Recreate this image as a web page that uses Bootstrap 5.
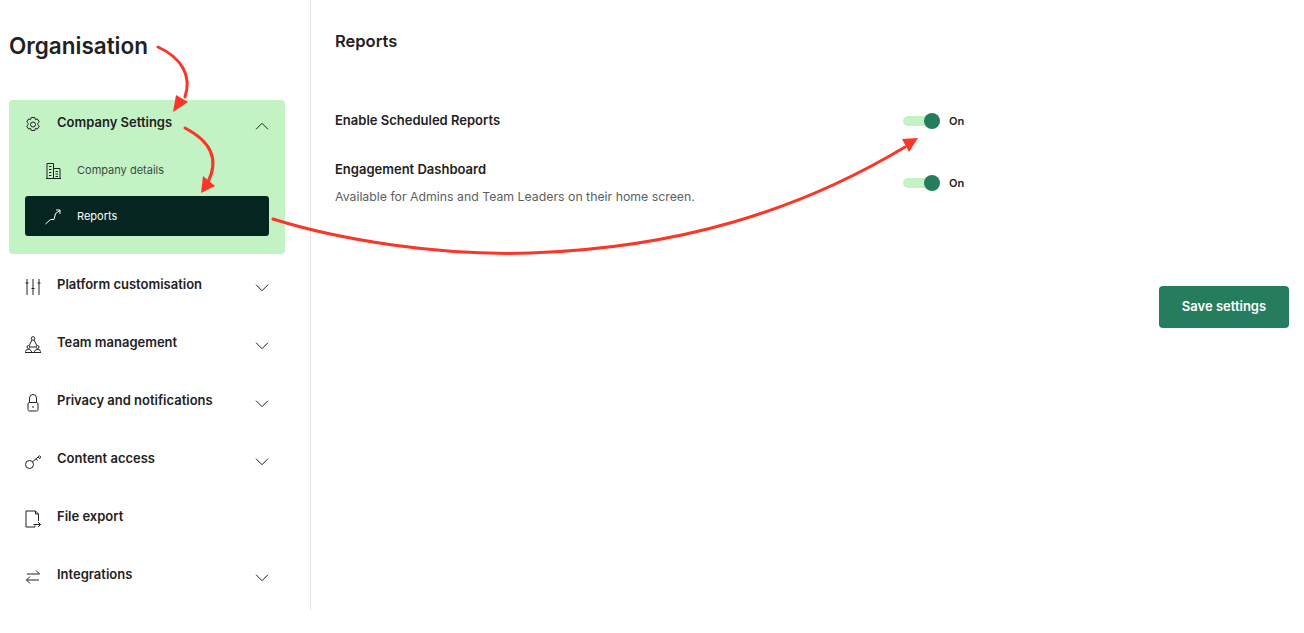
<!DOCTYPE html>
<html>
<head>
    <title>Organisation - Reports</title>
    <meta charset="UTF-8">
    <link href="https://cdn.jsdelivr.net/npm/bootstrap@5.3.0/dist/css/bootstrap.min.css" rel="stylesheet">
    <style>
        html, body { height: 633px; overflow: hidden; }
        body { font-family: "Inter", "Liberation Sans", sans-serif; color: #1f2222; background: #fff; position: relative; }
        .side-col { width: 311px; height: 610px; flex: none; padding-left: 9px; padding-right: 25px; border-right: 1px solid #e3e5e5; }
        .org-title { font-size: 22.5px; font-weight: 600; line-height: 30px; margin: 0; padding-top: 31px; height: 100px; }
        .open-group { background: #c3f3c5; border-radius: 4px; height: 154px; padding: 0 16px; margin-bottom: 3px; }
        .nav-line { height: 58px; display: flex; align-items: center; font-size: 13px; font-weight: 600; padding-bottom: 0; }
        .plain-line { padding: 0 16px; }
        .open-group .nav-line { height: 48px; }
        .nav-ico { width: 16px; height: 18px; flex: none; margin-right: 16px; margin-top: 1px; }
        .nav-text { flex: 1; position: relative; top: -1px; }
        .chev { width: 14px; height: 8px; flex: none; margin-right: 0; position: relative; top: 2px; }
        .sub-line { height: 40px; display: flex; align-items: center; font-size: 11px; color: #3c4a44; padding-left: 20px; border-radius: 3px; }
        .sub-line .nav-ico { margin-right: 16px; }
        .sub-active { background: #052620; color: #fff; margin-top: 4px; }
        .main-col { flex: 1; padding: 0 15px 0 24px; }
        .page-title { font-size: 16.5px; font-weight: 600; line-height: 24px; margin: 0; padding-top: 29px; height: 101px; }
        .set-label { width: 568px; flex: none; font-size: 13px; font-weight: 600; }
        .set-help { font-size: 12.3px; color: #5b5f5f; font-weight: 400; margin-top: 8px; line-height: 18px; }
        .tog-track { width: 37px; height: 10px; background: #c3f3c5; border-radius: 5px; position: relative; flex: none; }
        .tog-knob { width: 16px; height: 16px; background: #267d5e; border-radius: 50%; position: absolute; right: 0; top: -3px; }
        .tog-text { font-size: 11px; font-weight: 600; margin-left: 9px; }
        .btn-save { background: #267d5e; color: #fff; border: 0; border-radius: 4px; width: 130px; height: 42px; font-size: 13px; font-weight: 600; padding: 0; }
        .arrow-layer { position: absolute; left: 0; top: 0; width: 1304px; height: 633px; pointer-events: none; }
        svg.line-ico { fill: none; stroke: #1f2222; stroke-width: 1; }
    </style>
</head>
<body>
    <div class="d-flex">
        <!-- sidebar -->
        <div class="side-col">
            <h1 class="org-title">Organisation</h1>

            <div class="open-group">
                <div class="nav-line">
                    <svg class="nav-ico line-ico" viewBox="0 0 16 18"><path d="M6.2 1.5h3.6l.6 2.2 2-.8 1.9 3.1-1.6 1.5v1l1.6 1.5-1.9 3.1-2-.8-.6 2.2H6.200l-.6-2.200-2 .8-1.900-3.100 1.600-1.500v-1L1.700 6l1.900-3.100 2 .8z"/><circle cx="8" cy="8.500" r="2.500"/></svg>
                    <span class="nav-text">Company Settings</span>
                    <svg class="chev line-ico" viewBox="0 0 14 8"><path d="M1 7.300L7 1.300l6 6"/></svg>
                </div>
                <div class="sub-line" style="height:44px">
                    <svg class="nav-ico line-ico" viewBox="0 0 16 18"><path d="M1 16.500h15M2 16.500V1.500h6.500v15M8.500 6.500H15v10M4 4.500h2.500M4 7.500h2.500M4 10.500h2.500M4 13.500h2.500M10.500 9.500H13M10.500 12H13M10.500 14.500H13"/></svg>
                    <span>Company details</span>
                </div>
                <div class="sub-line sub-active">
                    <svg class="nav-ico line-ico" style="stroke:#fff" viewBox="0 0 16 18"><path d="M0.500 16l5-4.500h3.500l1.500-6 4.500-3M11 2h4v4"/></svg>
                    <span>Reports</span>
                </div>
            </div>

            <div class="nav-line plain-line">
                <svg class="nav-ico line-ico" viewBox="0 0 16 18"><path d="M2 1v16M8 1v16M14 1v16" /><path d="M2 4.500v1M8 10v1M14 4.500v1" stroke-width="3"/></svg>
                <span class="nav-text">Platform customisation</span>
                <svg class="chev line-ico" viewBox="0 0 14 8"><path d="M1 .700l6 6 6-6"/></svg>
            </div>
            <div class="nav-line plain-line">
                <svg class="nav-ico line-ico" viewBox="0 0 16 18"><circle cx="8" cy="2.500" r="1.800"/><circle cx="3.500" cy="11" r="1.500"/><circle cx="12.500" cy="11" r="1.500"/><path d="M6.800 4.200L4.300 9.500M9.200 4.200l2.500 5.300M5.500 11h5M0 16.500c0-2 1.500-3 3.500-3s3 1 3.200 3M9.300 16.500c.2-2 1.200-3 3.200-3s3.500 1 3.500 3M0 16.500h16"/></svg>
                <span class="nav-text">Team management</span>
                <svg class="chev line-ico" viewBox="0 0 14 8"><path d="M1 .700l6 6 6-6"/></svg>
            </div>
            <div class="nav-line plain-line">
                <svg class="nav-ico line-ico" viewBox="0 0 16 18"><rect x="3" y="8.500" width="10" height="8.500" rx="1.500"/><path d="M4.500 8.500V4a3.500 3.500 0 0 1 7 0v4.500M8 12v2" /></svg>
                <span class="nav-text">Privacy and notifications</span>
                <svg class="chev line-ico" viewBox="0 0 14 8"><path d="M1 .700l6 6 6-6"/></svg>
            </div>
            <div class="nav-line plain-line">
                <svg class="nav-ico line-ico" viewBox="0 0 16 18"><circle cx="4.500" cy="12.500" r="4"/><path d="M7.500 9.800l7-6M11 6.800l1.500 1.700M13 5l1.800 1.500 1-1.800-1.300-1"/></svg>
                <span class="nav-text">Content access</span>
                <svg class="chev line-ico" viewBox="0 0 14 8"><path d="M1 .700l6 6 6-6"/></svg>
            </div>
            <div class="nav-line plain-line">
                <svg class="nav-ico line-ico" viewBox="0 0 16 18"><path d="M10 15.500v1.500H1V1h9.500L13.500 4v7M10.500 1v3h3M8.500 14.500h7M13 12l2.500 2.500L13 17"/></svg>
                <span class="nav-text">File export</span>
            </div>
            <div class="nav-line plain-line">
                <svg class="nav-ico line-ico" viewBox="0 0 16 18"><path d="M2 6h12.500M11 2.500L14.500 6M14 12H1.500M5 8.500L1.500 12 5 15.500"/></svg>
                <span class="nav-text">Integrations</span>
                <svg class="chev line-ico" viewBox="0 0 14 8"><path d="M1 .700l6 6 6-6"/></svg>
            </div>
        </div>

        <!-- main settings -->
        <div class="main-col">
            <h2 class="page-title">Reports</h2>
            <div class="d-flex align-items-center" style="height:40px">
                <div class="set-label">Enable Scheduled Reports</div>
                <div class="tog-track"><div class="tog-knob"></div></div>
                <span class="tog-text">On</span>
            </div>
            <div class="d-flex align-items-center" style="margin-top:19px;height:46px">
                <div class="set-label">Engagement Dashboard
                    <div class="set-help">Available for Admins and Team Leaders on their home screen.</div>
                </div>
                <div class="tog-track"><div class="tog-knob"></div></div>
                <span class="tog-text">On</span>
            </div>
            <div class="d-flex justify-content-end" style="margin-top:80px">
                <button class="btn-save" type="button">Save settings</button>
            </div>
        </div>
    </div>

    <!-- red annotation arrows over the page -->
    <svg class="arrow-layer" viewBox="0 0 1304 633">
        <g fill="none" stroke="#fb3527" stroke-width="3" stroke-linecap="round">
            <path d="M158 47C182 58 192 76 185 97"/>
            <path d="M185 128C214 143 218 162 208 182"/>
            <path d="M273 219C340 240 440 256 530 253C680 248 800 210 905 147"/>
        </g>
        <g fill="#fb3527">
            <path d="M173 112L188 102 176 95z" transform="translate(0 0)"/>
            <path d="M201 193L215 186 203 176z"/>
            <path d="M918 138L902 139 909 152z"/>
        </g>
    </svg>
    <script src="https://cdn.jsdelivr.net/npm/bootstrap@5.3.0/dist/js/bootstrap.bundle.min.js"></script>
</body>
</html>
